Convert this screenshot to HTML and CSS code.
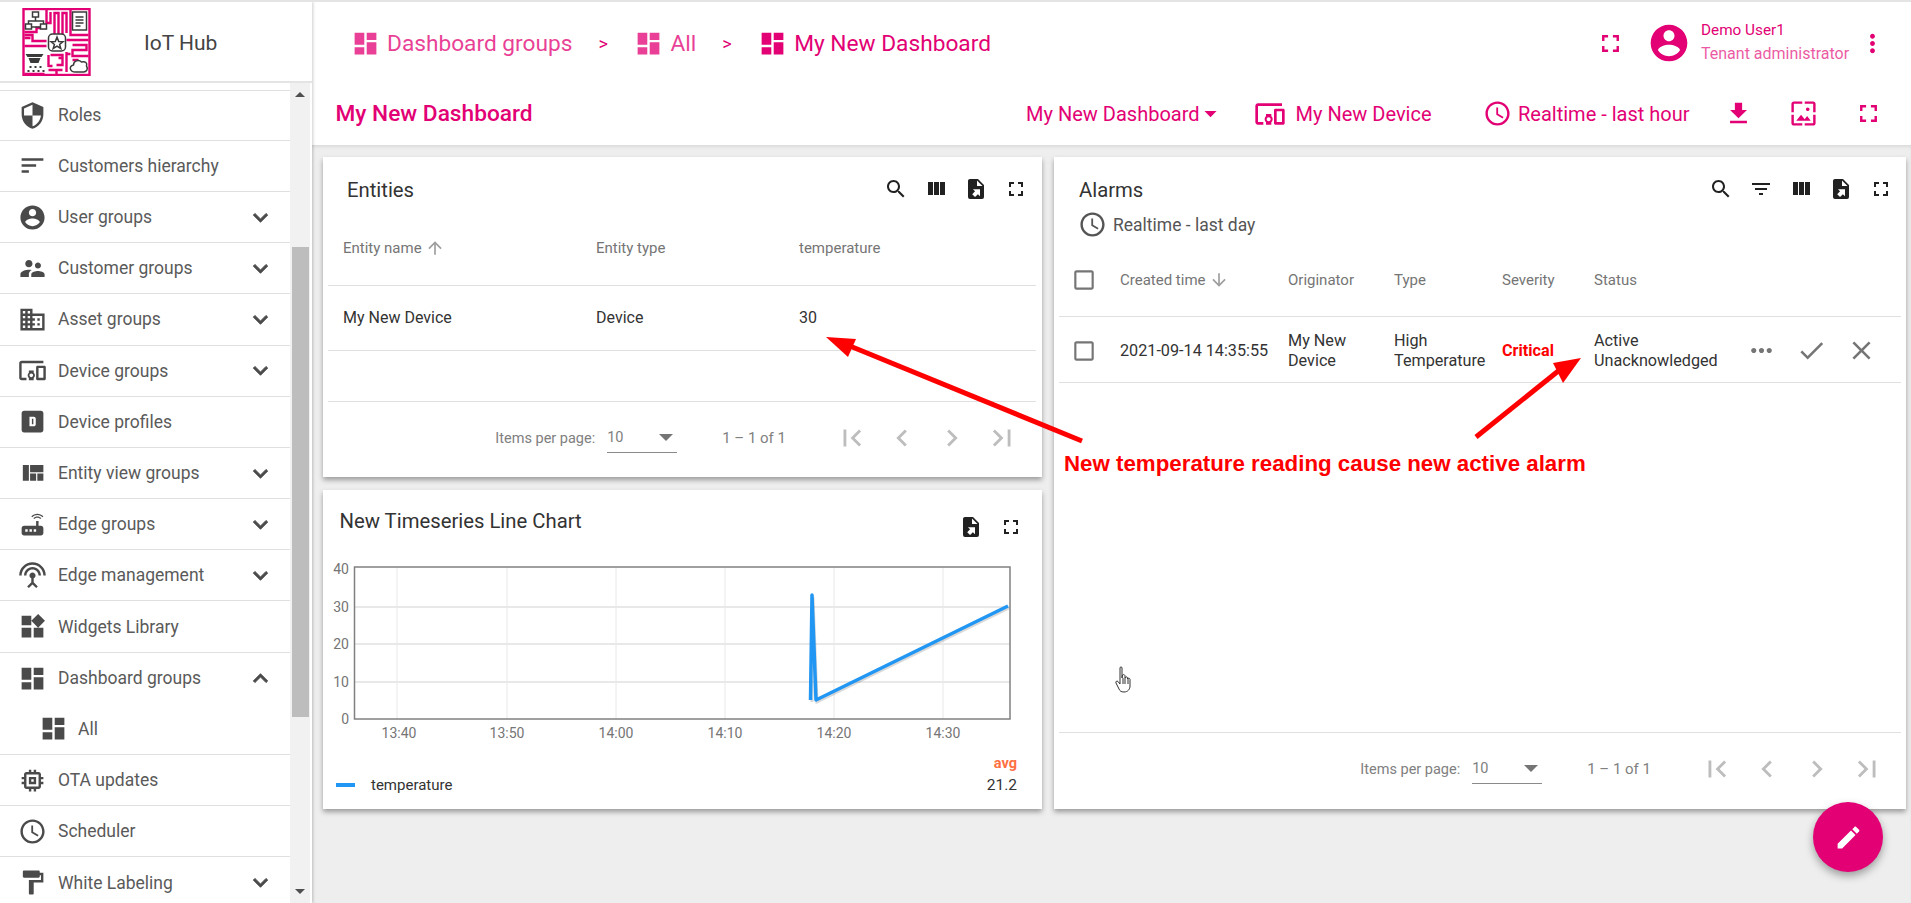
FILE: index.html
```html
<!DOCTYPE html>
<html lang="en">
<head>
  <meta charset="UTF-8">
  <title>My New Dashboard - IoT Hub</title>
  <link rel="stylesheet" href="styles.css">
</head>
<body>
  <!-- icon sprite -->
  <svg class="sprite" xmlns="http://www.w3.org/2000/svg">
    <symbol id="i-roles" viewBox="0 0 24 24"><path d="M12 1L3 5v6c0 5.55 3.84 10.74 9 12 5.16-1.26 9-6.45 9-12V5l-9-4zm0 10.99h7c-.53 4.12-3.28 7.79-7 8.94V12H5V6.3l7-3.11v8.8z"/></symbol>
    <symbol id="i-sort" viewBox="0 0 24 24"><path d="M3 18h6v-2H3v2zM3 6v2h18V6H3zm0 7h12v-2H3v2z"/></symbol>
    <symbol id="i-account" viewBox="0 0 24 24"><path d="M12 2C6.48 2 2 6.48 2 12s4.48 10 10 10 10-4.48 10-10S17.52 2 12 2zm0 3c1.66 0 3 1.34 3 3s-1.34 3-3 3-3-1.34-3-3 1.34-3 3-3zm0 14.2c-2.5 0-4.71-1.28-6-3.22.03-1.99 4-3.08 6-3.08 1.99 0 5.97 1.09 6 3.08-1.29 1.94-3.5 3.22-6 3.22z"/></symbol>
    <symbol id="i-people" viewBox="0 0 24 24"><path d="M16.5 12c1.38 0 2.49-1.12 2.49-2.5S17.88 7 16.5 7C15.12 7 14 8.12 14 9.5s1.12 2.5 2.5 2.5zM9 11c1.66 0 2.99-1.34 2.99-3S10.66 5 9 5C7.34 5 6 6.34 6 8s1.34 3 3 3zm7.5 3c-1.83 0-5.5.92-5.5 2.75V19h11v-2.25c0-1.83-3.67-2.75-5.5-2.75zM9 13c-2.33 0-7 1.17-7 3.5V19h7v-2.25c0-.85.33-2.34 2.37-3.47C10.5 13.1 9.66 13 9 13z"/></symbol>
    <symbol id="i-domain" viewBox="0 0 24 24"><path d="M12 7V3H2v18h20V7H12zM6 19H4v-2h2v2zm0-4H4v-2h2v2zm0-4H4V9h2v2zm0-4H4V5h2v2zm4 12H8v-2h2v2zm0-4H8v-2h2v2zm0-4H8V9h2v2zm0-4H8V5h2v2zm10 12h-8v-2h2v-2h-2v-2h2v-2h-2V9h8v10zm-2-8h-2v2h2v-2zm0 4h-2v2h2v-2z"/></symbol>
    <symbol id="i-devices" viewBox="0 0 24 24"><path d="M3 6h18V4H3c-1.1 0-2 .9-2 2v12c0 1.1.9 2 2 2h4v-2H3V6zm10 6H9v1.78c-.61.55-1 1.33-1 2.22s.39 1.67 1 2.22V20h4v-1.78c.61-.55 1-1.34 1-2.22s-.39-1.67-1-2.22V12zm-2 5.5c-.83 0-1.5-.67-1.5-1.5s.67-1.5 1.5-1.5 1.5.67 1.5 1.5-.67 1.5-1.5 1.5zM22 8h-6c-.5 0-1 .5-1 1v10c0 .5.5 1 1 1h6c.5 0 1-.5 1-1V9c0-.5-.5-1-1-1zm-1 10h-4v-8h4v8z"/></symbol>
    <symbol id="i-profile" viewBox="0 0 24 24"><path fill-rule="evenodd" d="M5 3h14c1.1 0 2 .9 2 2v14c0 1.1-.9 2-2 2H5c-1.1 0-2-.9-2-2V5c0-1.1.9-2 2-2zm4.5 5v8H13c1 0 1.7-.7 1.7-1.7V9.7C14.7 8.7 14 8 13 8H9.5zm2 1.7h1.2v4.6h-1.2z"/></symbol>
    <symbol id="i-quilt" viewBox="0 0 24 24"><path d="M10 18h5v-6h-5v6zm-6 0h5V5H4v13zm12 0h5v-6h-5v6zM10 5v6h11V5H10z"/></symbol>
    <symbol id="i-router" viewBox="0 0 24 24"><path d="M20.2 5.9l.8-.8C19.6 3.7 17.8 3 16 3s-3.6.7-5 2.1l.8.8C13 4.8 14.5 4.2 16 4.2s3 .6 4.2 1.7zm-.9.8c-.9-.9-2.1-1.4-3.3-1.4s-2.4.5-3.3 1.4l.8.8c.7-.7 1.6-1 2.5-1 .9 0 1.8.3 2.5 1l.8-.8zM19 13h-2V9h-2v4H5c-1.1 0-2 .9-2 2v4c0 1.1.9 2 2 2h14c1.1 0 2-.9 2-2v-4c0-1.1-.9-2-2-2zM8 18H6v-2h2v2zm3.5 0h-2v-2h2v2zm3.5 0h-2v-2h2v2z"/></symbol>
    <symbol id="i-antenna" viewBox="0 0 24 24"><path d="M12 5c-3.87 0-7 3.13-7 7h2c0-2.76 2.24-5 5-5s5 2.24 5 5h2c0-3.87-3.13-7-7-7zm1 9.29c.88-.39 1.5-1.26 1.5-2.29 0-1.38-1.12-2.5-2.5-2.5S9.5 10.62 9.5 12c0 1.02.62 1.9 1.5 2.29v3.3L7.59 21 9 22.41l3-3 3 3L16.41 21 13 17.59v-3.3zM12 1C5.93 1 1 5.93 1 12h2c0-4.97 4.03-9 9-9s9 4.03 9 9h2c0-6.07-4.93-11-11-11z"/></symbol>
    <symbol id="i-widgets" viewBox="0 0 24 24"><path d="M13 13v8h8v-8h-8zM3 21h8v-8H3v8zM3 3v8h8V3H3zm13.66-1.31L11 7.34 16.66 13l5.66-5.66-5.66-5.65z"/></symbol>
    <symbol id="i-dash" viewBox="0 0 24 24"><path d="M3 13h8V3H3v10zm0 8h8v-6H3v6zm10 0h8V11h-8v10zm0-18v6h8V3h-8z"/></symbol>
    <symbol id="i-memory" viewBox="0 0 24 24"><path d="M15 9H9v6h6V9zm-2 4h-2v-2h2v2zm8-2V9h-2V7c0-1.1-.9-2-2-2h-2V3h-2v2h-2V3H9v2H7c-1.1 0-2 .9-2 2v2H3v2h2v2H3v2h2v2c0 1.1.9 2 2 2h2v2h2v-2h2v2h2v-2h2c1.1 0 2-.9 2-2v-2h2v-2h-2v-2h2zm-4 6H7V7h10v10z"/></symbol>
    <symbol id="i-clock" viewBox="0 0 24 24"><path d="M11.99 2C6.47 2 2 6.48 2 12s4.47 10 9.99 10C17.52 22 22 17.52 22 12S17.52 2 11.99 2zM12 20c-4.42 0-8-3.58-8-8s3.58-8 8-8 8 3.58 8 8-3.58 8-8 8zm.5-13H11v6l5.25 3.15.75-1.23-4.5-2.67z"/></symbol>
    <symbol id="i-paint" viewBox="0 0 24 24"><path d="M18 4V3c0-.55-.45-1-1-1H5c-.55 0-1 .45-1 1v4c0 .55.45 1 1 1h12c.55 0 1-.45 1-1V6h1v4H9v11c0 .55.45 1 1 1h2c.55 0 1-.45 1-1v-9h8V4h-3z"/></symbol>
    <symbol id="i-more" viewBox="0 0 24 24"><path d="M16.59 8.59L12 13.17 7.41 8.59 6 10l6 6 6-6z"/></symbol>
    <symbol id="i-less" viewBox="0 0 24 24"><path d="M12 8l-6 6 1.41 1.41L12 10.83l4.59 4.58L18 14z"/></symbol>
    <symbol id="i-full" viewBox="0 0 24 24"><path d="M7 14H5v5h5v-2H7v-3zm-2-4h2V7h3V5H5v5zm12 7h-3v2h5v-5h-2v3zM14 5v2h3v3h2V5h-5z"/></symbol>
    <symbol id="i-vert" viewBox="0 0 24 24"><path d="M12 8c1.1 0 2-.9 2-2s-.9-2-2-2-2 .9-2 2 .9 2 2 2zm0 2c-1.1 0-2 .9-2 2s.9 2 2 2 2-.9 2-2-.9-2-2-2zm0 6c-1.1 0-2 .9-2 2s.9 2 2 2 2-.9 2-2-.9-2-2-2z"/></symbol>
    <symbol id="i-horiz" viewBox="0 0 24 24"><path d="M6 10c-1.1 0-2 .9-2 2s.9 2 2 2 2-.9 2-2-.9-2-2-2zm12 0c-1.1 0-2 .9-2 2s.9 2 2 2 2-.9 2-2-.9-2-2-2zm-6 0c-1.1 0-2 .9-2 2s.9 2 2 2 2-.9 2-2-.9-2-2-2z"/></symbol>
    <symbol id="i-drop" viewBox="0 0 24 24"><path d="M7 10l5 5 5-5z"/></symbol>
    <symbol id="i-download" viewBox="0 0 24 24"><path d="M19 9h-4V3H9v6H5l7 7 7-7zM5 18v2h14v-2H5z"/></symbol>
    <symbol id="i-wallpaper" viewBox="0 0 24 24"><path d="M4 4h7V2H4c-1.1 0-2 .9-2 2v7h2V4zm6 9l-4 5h12l-3-4-2.03 2.71L10 13zm7-4.5c0-.83-.67-1.5-1.5-1.5S14 7.67 14 8.5s.67 1.5 1.5 1.5S17 9.33 17 8.5zM20 2h-7v2h7v7h2V4c0-1.1-.9-2-2-2zm0 18h-7v2h7c1.1 0 2-.9 2-2v-7h-2v7zM4 13H2v7c0 1.1.9 2 2 2h7v-2H4v-7z"/></symbol>
    <symbol id="i-search" viewBox="0 0 24 24"><path d="M15.5 14h-.79l-.28-.27C15.41 12.59 16 11.11 16 9.5 16 5.91 13.09 3 9.5 3S3 5.91 3 9.5 5.91 16 9.5 16c1.61 0 3.09-.59 4.23-1.57l.27.28v.79l5 4.99L20.49 19l-4.99-5zm-6 0C7.01 14 5 11.99 5 9.5S7.01 5 9.5 5 14 7.01 14 9.5 11.99 14 9.5 14z"/></symbol>
    <symbol id="i-columns" viewBox="0 0 24 24"><path d="M10 18h5V5h-5v13zm-6 0h5V5H4v13zM16 5v13h5V5h-5z"/></symbol>
    <symbol id="i-export" viewBox="0 0 24 24"><path d="M6 2C4.89 2 4 2.9 4 4v16a2 2 0 0 0 2 2h12a2 2 0 0 0 2-2V8l-6-6M13 3.5L18.5 9H13M8.93 12.22H16v7.07l-2.12-2.12L11.05 20l-2.83-2.83 2.83-2.83"/></symbol>
    <symbol id="i-filter" viewBox="0 0 24 24"><path d="M10 18h4v-2h-4v2zM3 6v2h18V6H3zm3 7h12v-2H6v2z"/></symbol>
    <symbol id="i-up" viewBox="0 0 24 24"><path d="M4 12l1.41 1.41L11 7.83V20h2V7.83l5.58 5.59L20 12l-8-8-8 8z"/></symbol>
    <symbol id="i-down" viewBox="0 0 24 24"><path d="M20 12l-1.41-1.41L13 16.17V4h-2v12.17l-5.58-5.59L4 12l8 8 8-8z"/></symbol>
    <symbol id="i-first" viewBox="0 0 24 24"><path d="M18.41 16.59L13.82 12l4.59-4.59L17 6l-6 6 6 6zM6 6h2v12H6z"/></symbol>
    <symbol id="i-prev" viewBox="0 0 24 24"><path d="M15.41 7.41L14 6l-6 6 6 6 1.41-1.41L10.83 12z"/></symbol>
    <symbol id="i-next" viewBox="0 0 24 24"><path d="M10 6L8.59 7.41 13.17 12l-4.58 4.59L10 18l6-6z"/></symbol>
    <symbol id="i-last" viewBox="0 0 24 24"><path d="M5.59 7.41L10.18 12l-4.59 4.59L7 18l6-6-6-6zM16 6h2v12h-2z"/></symbol>
    <symbol id="i-box" viewBox="0 0 24 24"><path d="M19 5v14H5V5h14m0-2H5c-1.1 0-2 .9-2 2v14c0 1.1.9 2 2 2h14c1.1 0 2-.9 2-2V5c0-1.1-.9-2-2-2z"/></symbol>
    <symbol id="i-check" viewBox="0 0 24 24"><path d="M9 16.17L4.83 12l-1.42 1.41L9 19 21 7l-1.41-1.41z"/></symbol>
    <symbol id="i-close" viewBox="0 0 24 24"><path d="M19 6.41L17.59 5 12 10.59 6.41 5 5 6.41 10.59 12 5 17.59 6.41 19 12 13.41 17.59 19 19 17.59 13.41 12z"/></symbol>
    <symbol id="i-edit" viewBox="0 0 24 24"><path d="M3 17.25V21h3.75L17.81 9.94l-3.75-3.75L3 17.25zM20.71 7.04c.39-.39.39-1.02 0-1.41l-2.34-2.34c-.39-.39-1.02-.39-1.41 0l-1.83 1.83 3.75 3.75 1.83-1.83z"/></symbol>
  </svg>

  <div class="app">
    <!-- Sidebar -->
    <aside class="sidebar">
      <div class="brand">
        <svg class="logo" viewBox="0 0 68 68">
          <rect width="68" height="68" fill="#fff"/>
          <g fill="none" stroke="#e20074" stroke-width="2.4">
            <rect x="1" y="1" width="66" height="66"/>
            <path d="M24 1v14h4V4M32 27V5h4v22M40 27V5h4v20M48 1v26h18M2 24h12v-4h10M2 27h8v6h14M2 30h6M2 38h22M44 32h22M50 37h14v5H50v6h16M44 46h4M28 47h12v10h-6M44 44v20M50 52h6M26 62h14M26 58h4M2 66h20M26 47v12M36 50h4M34 62v4"/>
          </g>
          <g fill="none" stroke="#3a3a3a" stroke-width="1.5">
            <rect x="10" y="4" width="6" height="5" fill="#fff"/>
            <rect x="3" y="16" width="6" height="5" fill="#fff"/>
            <rect x="18" y="16" width="6" height="5" fill="#fff"/>
            <path d="M13 9v4H6v3M13 13h8v3M9 19h9"/>
            <rect x="50" y="4" width="14" height="18" fill="#fff"/>
            <path d="M53 9h8M53 12h8M53 15h8M53 18h5"/>
            <rect x="26" y="26" width="17" height="17" rx="4" fill="#fff"/>
            <path d="M34.5 29l1.7 4.5 4.3.2-3.4 2.7 1.2 4.1-3.8-2.4-3.8 2.4 1.2-4.1-3.4-2.7 4.3-.2z"/>
            <path d="M53 64c-6 0-7-6-2-7 0-4 5-6 8-3 4-1 6 1 5 4 2 3 0 6-3 6z" fill="#fff"/>
          </g>
          <g fill="#3a3a3a">
            <path d="M3 46h18l-2 3H5zM6 50h12l-2 5H8z"/>
            <path d="M7 58h2v2H7zM12 58h2v2h-2zM17 58h2v2h-2zM5 62h2v2H5zM10 62h2v2h-2zM15 62h2v2h-2zM20 62h2v2h-2z"/>
          </g>
        </svg>
        <span class="brand-name">IoT Hub</span>
      </div>
      <div class="side-body">
        <ul class="nav">
          <li class="nav-item"><svg class="ico"><use href="#i-roles"/></svg><span>Roles</span></li>
          <li class="nav-item"><svg class="ico"><use href="#i-sort"/></svg><span>Customers hierarchy</span></li>
          <li class="nav-item"><svg class="ico"><use href="#i-account"/></svg><span>User groups</span><svg class="ico chev"><use href="#i-more"/></svg></li>
          <li class="nav-item"><svg class="ico"><use href="#i-people"/></svg><span>Customer groups</span><svg class="ico chev"><use href="#i-more"/></svg></li>
          <li class="nav-item"><svg class="ico"><use href="#i-domain"/></svg><span>Asset groups</span><svg class="ico chev"><use href="#i-more"/></svg></li>
          <li class="nav-item"><svg class="ico"><use href="#i-devices"/></svg><span>Device groups</span><svg class="ico chev"><use href="#i-more"/></svg></li>
          <li class="nav-item"><svg class="ico"><use href="#i-profile"/></svg><span>Device profiles</span></li>
          <li class="nav-item"><svg class="ico"><use href="#i-quilt"/></svg><span>Entity view groups</span><svg class="ico chev"><use href="#i-more"/></svg></li>
          <li class="nav-item"><svg class="ico"><use href="#i-router"/></svg><span>Edge groups</span><svg class="ico chev"><use href="#i-more"/></svg></li>
          <li class="nav-item"><svg class="ico"><use href="#i-antenna"/></svg><span>Edge management</span><svg class="ico chev"><use href="#i-more"/></svg></li>
          <li class="nav-item"><svg class="ico"><use href="#i-widgets"/></svg><span>Widgets Library</span></li>
          <li class="nav-item open"><svg class="ico"><use href="#i-dash"/></svg><span>Dashboard groups</span><svg class="ico chev"><use href="#i-less"/></svg></li>
          <li class="nav-item sub"><svg class="ico"><use href="#i-dash"/></svg><span>All</span></li>
          <li class="nav-item"><svg class="ico"><use href="#i-memory"/></svg><span>OTA updates</span></li>
          <li class="nav-item"><svg class="ico"><use href="#i-clock"/></svg><span>Scheduler</span></li>
          <li class="nav-item"><svg class="ico"><use href="#i-paint"/></svg><span>White Labeling</span><svg class="ico chev"><use href="#i-more"/></svg></li>
        </ul>
        <div class="scrollbar">
          <i class="arrow-up"></i>
          <div class="thumb"></div>
          <i class="arrow-down"></i>
        </div>
      </div>
    </aside>

    <main class="main">
      <header class="topbar">
        <div class="crumb faded"><svg class="ico"><use href="#i-dash"/></svg><span>Dashboard groups</span></div>
        <span class="crumb-sep">&gt;</span>
        <div class="crumb faded"><svg class="ico"><use href="#i-dash"/></svg><span>All</span></div>
        <span class="crumb-sep">&gt;</span>
        <div class="crumb"><svg class="ico"><use href="#i-dash"/></svg><span>My New Dashboard</span></div>
        <div class="user-box">
          <svg class="ico"><use href="#i-full"/></svg>
          <svg class="avatar"><use href="#i-account"/></svg>
          <div class="user-text">
            <div>Demo User1</div>
            <div class="user-role">Tenant administrator</div>
          </div>
          <svg class="ico"><use href="#i-vert"/></svg>
        </div>
      </header>

      <div class="toolbar">
        <h1 class="dash-title">My New Dashboard</h1>
        <div class="tools">
          <span class="tool-dash">My New Dashboard</span>
          <svg class="ico caret"><use href="#i-drop"/></svg>
          <svg class="ico tool-dev"><use href="#i-devices"/></svg>
          <span class="tool-label">My New Device</span>
          <svg class="ico tool-time"><use href="#i-clock"/></svg>
          <span class="tool-label">Realtime - last hour</span>
          <svg class="ico tool-dl"><use href="#i-download"/></svg>
          <svg class="ico tool-img"><use href="#i-wallpaper"/></svg>
          <svg class="ico tool-full"><use href="#i-full"/></svg>
        </div>
      </div>

      <section class="board">
        <div class="left-col">
          <!-- Entities -->
          <div class="card entities">
            <div class="card-head">
              <span class="card-title">Entities</span>
              <div class="card-actions">
                <svg class="act"><use href="#i-search"/></svg>
                <svg class="act"><use href="#i-columns"/></svg>
                <svg class="act"><use href="#i-export"/></svg>
                <svg class="act"><use href="#i-full"/></svg>
              </div>
            </div>
            <div class="row ent-row head-row">
              <span>Entity name <svg class="sort-ico"><use href="#i-up"/></svg></span>
              <span>Entity type</span>
              <span>temperature</span>
            </div>
            <div class="row ent-row data-row">
              <span>My New Device</span>
              <span>Device</span>
              <span>30</span>
            </div>
            <div class="row empty-row"></div>
            <div class="pager">
              <span>Items per page:</span>
              <div class="page-size"><span>10</span><i class="size-caret"></i></div>
              <span class="page-range">1 – 1 of 1</span>
              <svg class="page-btn first"><use href="#i-first"/></svg>
              <svg class="page-btn"><use href="#i-prev"/></svg>
              <svg class="page-btn"><use href="#i-next"/></svg>
              <svg class="page-btn"><use href="#i-last"/></svg>
            </div>
          </div>

          <!-- Chart -->
          <div class="card chart-card">
            <div class="chart-head">
              <span class="card-title">New Timeseries Line Chart</span>
              <div class="card-actions">
                <svg class="act"><use href="#i-export"/></svg>
                <svg class="act"><use href="#i-full"/></svg>
              </div>
            </div>
            <svg class="chart" viewBox="0 0 719 200">
              <g class="grid-x">
                <path d="M74 22v152M184 22v152M293 22v152M402 22v152M511 22v152M620 22v152"/>
              </g>
              <g class="grid-y">
                <path d="M32 62h655M32 99h655M32 137h655"/>
              </g>
              <rect class="plot" x="31.5" y="22" width="655.5" height="152"/>
              <g class="tick-y">
                <text x="26" y="29">40</text>
                <text x="26" y="67">30</text>
                <text x="26" y="104">20</text>
                <text x="26" y="142">10</text>
                <text x="26" y="179">0</text>
              </g>
              <g class="tick-x">
                <text x="76" y="193">13:40</text>
                <text x="184" y="193">13:50</text>
                <text x="293" y="193">14:00</text>
                <text x="402" y="193">14:10</text>
                <text x="511" y="193">14:20</text>
                <text x="620" y="193">14:30</text>
              </g>
              <polyline class="line-shadow" points="489,157 490,52 494,157 686,63"/>
              <polyline class="line" points="487.5,155 489,50 493,155 685,61"/>
            </svg>
            <div class="legend-head">avg</div>
            <div class="legend">
              <i class="legend-mark"></i>
              <span>temperature</span>
              <span class="legend-val">21.2</span>
            </div>
          </div>
        </div>

        <!-- Alarms -->
        <div class="card alarms">
          <div class="alarm-head">
            <div>
              <div class="card-title">Alarms</div>
              <div class="alarm-range"><svg class="ico"><use href="#i-clock"/></svg><span>Realtime - last day</span></div>
            </div>
            <div class="card-actions">
              <svg class="act"><use href="#i-search"/></svg>
              <svg class="act"><use href="#i-filter"/></svg>
              <svg class="act"><use href="#i-columns"/></svg>
              <svg class="act"><use href="#i-export"/></svg>
              <svg class="act"><use href="#i-full"/></svg>
            </div>
          </div>
          <div class="row alarm-row head-row">
            <svg class="tick"><use href="#i-box"/></svg>
            <span>Created time <svg class="sort-ico"><use href="#i-down"/></svg></span>
            <span>Originator</span>
            <span>Type</span>
            <span>Severity</span>
            <span>Status</span>
          </div>
          <div class="row alarm-row data-row">
            <svg class="tick"><use href="#i-box"/></svg>
            <span>2021-09-14 14:35:55</span>
            <span>My New<br>Device</span>
            <span>High<br>Temperature</span>
            <span class="critical">Critical</span>
            <span>Active<br>Unacknowledged</span>
            <div class="row-actions">
              <svg class="row-act"><use href="#i-horiz"/></svg>
              <svg class="row-act"><use href="#i-check"/></svg>
              <svg class="row-act"><use href="#i-close"/></svg>
            </div>
          </div>
          <div class="alarm-fill"></div>
          <div class="pager">
            <span>Items per page:</span>
            <div class="page-size"><span>10</span><i class="size-caret"></i></div>
            <span class="page-range">1 – 1 of 1</span>
            <svg class="page-btn first"><use href="#i-first"/></svg>
            <svg class="page-btn"><use href="#i-prev"/></svg>
            <svg class="page-btn"><use href="#i-next"/></svg>
            <svg class="page-btn"><use href="#i-last"/></svg>
          </div>
        </div>
      </section>
    </main>

    <!-- Notes drawn over the screenshot -->
    <svg class="notes" viewBox="0 0 1911 903">
      <path class="note-line" d="M1082 441L845 344"/>
      <polygon class="note-head" points="826,337 856,339 848,357"/>
      <path class="note-line" d="M1476 437L1562 368"/>
      <polygon class="note-head" points="1581,358 1553,363 1563,383"/>
    </svg>
    <div class="note-text">New temperature reading cause new active alarm</div>

    <!-- hand cursor -->
    <svg class="hand" viewBox="0 0 20 28">
      <path d="M5 2c0-1.5 2-1.5 2 0v10l.5-3c1.5-1 2.5 0 2.5 1v2c.5-1.5 2.5-1.5 2.5 0v1c.5-1.5 2.5-1 2.5.5V20c0 3-2 6-6 6-3 0-4-1-5-3l-3-6c-.8-1.5 1-2.5 2-1.500L5 18z"/>
      <path d="M8 12v6M10 12v6M13 13v5"/>
    </svg>

    <button class="fab"><svg class="fab-ico"><use href="#i-edit"/></svg></button>
  </div>
</body>
</html>
```

FILE: styles.css
```css
:root {
  --magenta: #e20074;
  --nav-text: #5a5a5a;
  --nav-icon: #4a4a4a;
  --line: #e0e0e0;
  --muted: #757575;
  --cell: #333;
}

* {
  box-sizing: border-box;
  margin: 0;
  padding: 0;
}

html, body {
  height: 100%;
  overflow: hidden;
}

body {
  font-family: Roboto, "Liberation Sans", sans-serif;
  background: #eee;
}

.sprite {
  display: none;
}

.app {
  position: relative;
  width: 1911px;
  height: 903px;
  display: flex;
  overflow: hidden;
  border-top: 2px solid #e4e4e4;
}

.ico {
  width: 29px;
  height: 29px;
  fill: currentColor;
  flex: none;
}

/* Sidebar */
.sidebar {
  width: 312px;
  flex: none;
  background: #fff;
  display: flex;
  flex-direction: column;
  box-shadow: 1px 0 3px rgba(0, 0, 0, 0.2);
  z-index: 2;
}

.brand {
  height: 81px;
  flex: none;
  display: flex;
  align-items: center;
  padding-left: 22px;
  border-bottom: 2px solid #e4e4e4;
}

.logo {
  width: 69px;
  height: 68px;
  flex: none;
}

.brand-name {
  margin-left: 53px;
  margin-top: 3px;
  font-size: 21px;
  color: #444;
}

.side-body {
  flex: 1;
  display: flex;
  min-height: 0;
}

.nav {
  flex: 1;
  list-style: none;
  padding-top: 6.6px;
  overflow: hidden;
}

.nav-item {
  height: 51.2px;
  display: flex;
  align-items: center;
  padding-left: 18px;
  padding-right: 15px;
  font-size: 17.5px;
  color: var(--nav-text);
  border-bottom: 1px solid var(--line);
}

.nav-item:first-child {
  border-top: 1px solid var(--line);
}

.nav-item .ico {
  color: var(--nav-icon);
  margin-right: 11px;
}

.nav-item .chev {
  margin-left: auto;
  margin-right: 0;
  stroke: currentColor;
  stroke-width: 0.7;
}

.nav-item.open {
  border-bottom: none;
}

.nav-item.sub {
  padding-left: 39px;
}

.nav-item.sub .ico {
  margin-right: 10px;
}

.scrollbar {
  width: 22px;
  flex: none;
  background: #f1f1f1;
  display: flex;
  flex-direction: column;
  align-items: center;
  border-right: 2px solid #fff;
}

.arrow-up,
.arrow-down {
  width: 0;
  height: 0;
  border-left: 5px solid transparent;
  border-right: 5px solid transparent;
}

.arrow-up {
  margin-top: 9px;
  border-bottom: 5px solid #505050;
}

.arrow-down {
  margin-top: auto;
  margin-bottom: 9px;
  border-top: 5px solid #505050;
}

.thumb {
  width: 17px;
  height: 470px;
  margin-top: 150px;
  background: #bdbdbd;
}

/* Main */
.main {
  flex: 1;
  min-width: 0;
  display: flex;
  flex-direction: column;
  background: #fff;
}

.topbar {
  height: 80px;
  flex: none;
  display: flex;
  align-items: center;
  padding-top: 2px;
  padding-left: 38.5px;
  padding-right: 24px;
  color: var(--magenta);
}

.crumb {
  display: flex;
  align-items: center;
  font-size: 22.7px;
}

.crumb .ico {
  margin-right: 7.5px;
}

.crumb.faded {
  opacity: 0.75;
}

.crumb-sep {
  font-size: 18px;
  margin: 0 26px;
}

.user-box {
  margin-left: auto;
  display: flex;
  align-items: center;
}

.avatar {
  width: 44px;
  height: 44px;
  fill: currentColor;
  margin-left: 22px;
}

.user-text {
  margin-left: 10px;
  margin-right: 10px;
  width: 147px;
  font-size: 15.3px;
  line-height: 24px;
  margin-top: -2px;
}

.user-role {
  font-size: 16px;
  opacity: 0.65;
  white-space: nowrap;
}

.toolbar {
  height: 63px;
  flex: none;
  display: flex;
  align-items: center;
  justify-content: space-between;
  padding-left: 23.5px;
  padding-right: 28px;
  color: var(--magenta);
}

.dash-title {
  font-size: 22.7px;
  font-weight: 500;
}

.tools {
  display: flex;
  align-items: center;
  font-size: 20px;
}

.caret { margin-left: -3.5px; }
.tool-dev { width: 32px; height: 32px; margin-left: 28.5px; margin-right: 10px; }
.tool-time { margin-left: 51.5px; margin-right: 6px; }
.tool-dl { margin-left: 34.5px; }
.tool-img { margin-left: 36px; }
.tool-full { margin-left: 36px; }

.board {
  flex: 1;
  min-height: 0;
  display: grid;
  grid-template-columns: 719px 852px;
  column-gap: 12px;
  padding: 12px 0 0 11px;
  background: #eee;
  box-shadow: inset 0 3px 4px -2px rgba(0, 0, 0, 0.12);
  align-items: start;
}

.left-col {
  display: flex;
  flex-direction: column;
  gap: 13px;
}

.card {
  background: #fff;
  box-shadow: 0 3px 5px rgba(0, 0, 0, 0.35);
}

.entities {
  height: 320px;
  padding: 0 6px 0 5px;
}

.card-head {
  height: 53px;
  padding: 16px 0 0 19px;
  display: flex;
  justify-content: space-between;
}

.card-title {
  font-size: 20.3px;
  line-height: 34px;
  color: #333;
}

.card-actions {
  display: flex;
}

.act {
  width: 24px;
  height: 24px;
  margin: 4px 8px;
  fill: #212121;
  flex: none;
}

.row {
  border-bottom: 1px solid var(--line);
  font-size: 16px;
  color: var(--cell);
}

.head-row {
  font-size: 15px;
  color: var(--muted);
}

.sort-ico {
  width: 20px;
  height: 20px;
  fill: #9e9e9e;
  vertical-align: -5px;
}

.ent-row {
  display: grid;
  grid-template-columns: 253px 203px 1fr;
  align-items: center;
  padding-left: 15px;
}

.ent-row.head-row { height: 76px; }
.ent-row.data-row { height: 65px; padding-bottom: 2px; }

.empty-row { height: 51px; }

.pager {
  display: flex;
  align-items: center;
  justify-content: flex-end;
  height: 76px;
  padding-right: 9px;
  padding-bottom: 4px;
  font-size: 14.5px;
  color: #808080;
}

.page-size {
  width: 70px;
  height: 30px;
  margin-left: 12px;
  display: flex;
  align-items: center;
  justify-content: space-between;
  border-bottom: 1px solid #8a8a8a;
}

.size-caret {
  width: 0;
  height: 0;
  margin-right: 4px;
  border-left: 7px solid transparent;
  border-right: 7px solid transparent;
  border-top: 7px solid #757575;
}

.page-range {
  margin-left: 45px;
  font-size: 15px;
}

.page-btn {
  width: 34px;
  height: 34px;
  margin: 0 8px;
  fill: #bdbdbd;
  flex: none;
}

.page-btn.first {
  margin-left: 49px;
}

/* Chart */
.chart-card {
  height: 319px;
}

.chart-head {
  height: 55px;
  padding: 14px 11px 0 16.5px;
  display: flex;
  justify-content: space-between;
}

.chart-head .card-actions {
  padding-top: 7px;
}

.chart {
  display: block;
  width: 719px;
  height: 200px;
}

.grid-x path { stroke: #e8e8e8; stroke-width: 1; fill: none; }
.grid-y path { stroke: #e8e8e8; stroke-width: 2; fill: none; }
.plot { fill: none; stroke: #808080; stroke-width: 1.5; }

.chart text {
  font-family: Roboto, sans-serif;
  font-size: 14px;
  fill: #757575;
}

.tick-y text { text-anchor: end; }
.tick-x text { text-anchor: middle; }

.line {
  fill: none;
  stroke: #2196f3;
  stroke-width: 3.5;
  stroke-linejoin: round;
}

.line-shadow {
  fill: none;
  stroke: rgba(0, 0, 0, 0.15);
  stroke-width: 3;
}

.legend-head {
  padding-right: 25px;
  padding-top: 10px;
  text-align: right;
  font-size: 14.5px;
  font-weight: 700;
  color: #ff7043;
}

.legend {
  display: flex;
  align-items: center;
  padding: 4px 25px 0 13px;
  font-size: 15px;
  color: var(--cell);
}

.legend-mark {
  width: 19px;
  height: 4px;
  margin-right: 16px;
  background: #2196f3;
}

.legend-val {
  margin-left: auto;
  font-size: 15.5px;
}

/* Alarms */
.alarms {
  height: 652px;
  padding: 0 5px;
  display: flex;
  flex-direction: column;
}

.alarm-head {
  height: 86px;
  flex: none;
  padding: 16px 0 0 20px;
  display: flex;
  justify-content: space-between;
}

.alarm-range {
  display: flex;
  align-items: center;
  font-size: 17.5px;
  color: #555;
  margin-top: 3px;
}

.alarm-range .ico {
  margin-left: -1px;
  margin-right: 6px;
}

.alarm-row {
  display: grid;
  grid-template-columns: 61px 168px 106px 108px 92px 151.5px 1fr;
  align-items: center;
  flex: none;
}

.alarm-row.head-row { height: 74px; }
.alarm-row.data-row { height: 66px; padding-top: 2px; line-height: 20px; font-size: 16.2px; }

.tick {
  width: 26px;
  height: 26px;
  margin-left: 12px;
  fill: #757575;
}

.critical {
  color: #f00;
  font-weight: 700;
}

.row-actions {
  display: flex;
}

.row-act {
  width: 31px;
  height: 31px;
  margin-right: 19px;
  fill: #757575;
  flex: none;
}

.alarm-fill {
  flex: 1;
  border-bottom: 1px solid var(--line);
}

/* Overlay bits */
.notes {
  position: absolute;
  left: 0;
  top: -2px;
  width: 1911px;
  height: 903px;
  pointer-events: none;
  z-index: 3;
}

.note-line {
  fill: none;
  stroke: #f00;
  stroke-width: 5;
}

.note-head {
  fill: #f00;
}

.note-text {
  position: absolute;
  left: 1064px;
  top: 449px;
  font-family: "Liberation Sans", Arial, sans-serif;
  font-size: 22.3px;
  font-weight: 700;
  color: #f00;
  white-space: nowrap;
  z-index: 3;
}

.hand {
  position: absolute;
  left: 1115px;
  top: 664px;
  width: 20px;
  height: 28px;
  fill: #fff;
  stroke: #333;
  stroke-width: 1;
  z-index: 3;
}

.fab {
  position: absolute;
  left: 1813px;
  top: 800px;
  width: 70px;
  height: 70px;
  border: none;
  border-radius: 50%;
  background: var(--magenta);
  box-shadow: 0 4px 8px rgba(0, 0, 0, 0.35);
  display: flex;
  align-items: center;
  justify-content: center;
  z-index: 4;
}

.fab-ico {
  width: 29px;
  height: 29px;
  fill: #fff;
}
```
